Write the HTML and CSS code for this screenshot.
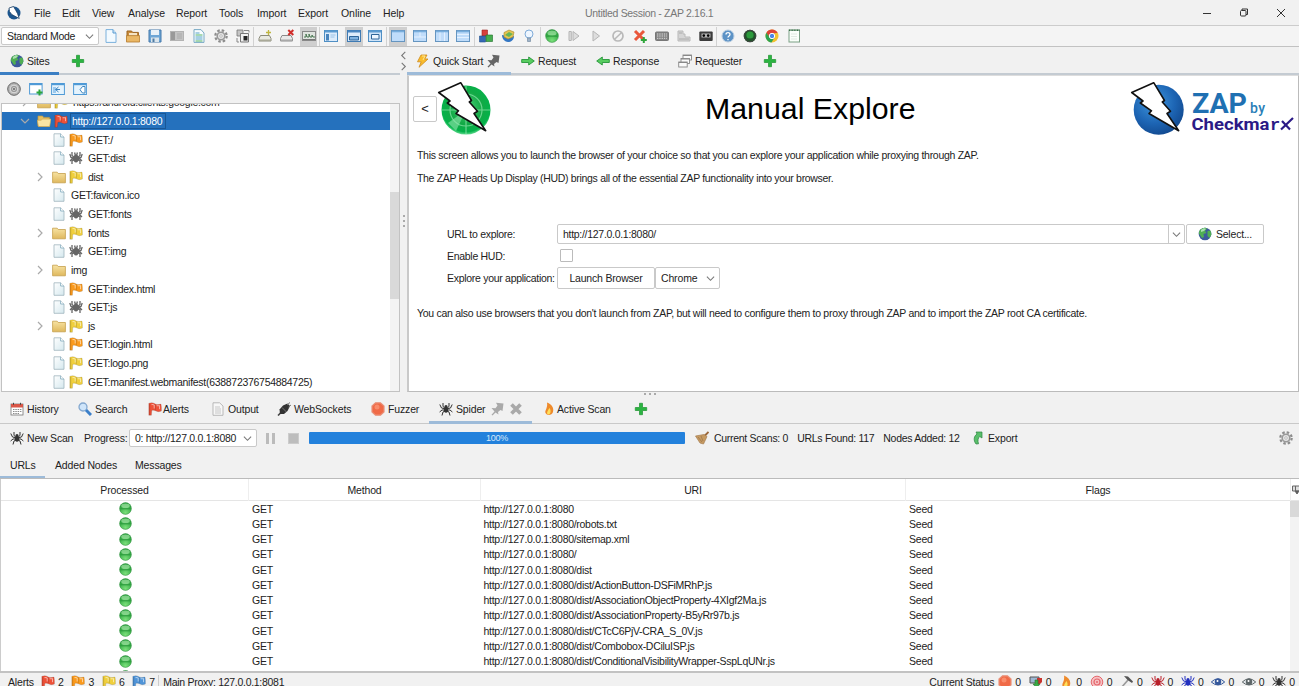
FILE: index.html
```html
<!DOCTYPE html>
<html lang="en">
<head>
<meta charset="utf-8">
<title>Untitled Session - ZAP 2.16.1</title>
<link rel="stylesheet" href="styles.css">
</head>
<body>
<svg class="defs" width="0" height="0">
<defs>
<radialGradient id="gGreen" cx=".5" cy=".45" r=".55"><stop offset="0" stop-color="#4fd27d"/><stop offset=".6" stop-color="#12a945"/><stop offset=".9" stop-color="#04b24a"/><stop offset="1" stop-color="#5fd98d"/></radialGradient>
<radialGradient id="gBlue" cx=".4" cy=".35" r=".7"><stop offset="0" stop-color="#3f97dd"/><stop offset=".6" stop-color="#1d65b4"/><stop offset="1" stop-color="#11488e"/></radialGradient>
<radialGradient id="gBall" cx=".5" cy=".85" r=".8"><stop offset="0" stop-color="#7be07b"/><stop offset="1" stop-color="#1f9a35"/></radialGradient>
<linearGradient id="gFold" x2="0" y2="1"><stop offset="0" stop-color="#f7e3a3"/><stop offset="1" stop-color="#dfb85d"/></linearGradient>
<linearGradient id="gDoc" x2="1" y2="1"><stop offset="0" stop-color="#fff"/><stop offset="1" stop-color="#d5e8ee"/></linearGradient>
<symbol id="bolt" viewBox="0 0 56 56"><path d="M1.7 11.5 23.7 1.7 34.5 19.5 32.3 21 40.5 30.3 37 32.5 48.7 49.7 19 32.5 21.5 29.8 10.3 22 13 20Z" fill="#fff" stroke="#111" stroke-width="1.6" stroke-linejoin="round"/></symbol>
<symbol id="app" viewBox="0 0 56 56"><circle cx="28" cy="28" r="26" fill="#1c568f"/><path d="M8 8 26 2 36 19 42 30 49 50 19 34 10 22Z" fill="#fff" stroke="#173b60" stroke-width="3"/></symbol>
<symbol id="doc" viewBox="0 0 14 14"><path d="M2 .8h6.6L12 4v9.3H2Z" fill="url(#gDoc)" stroke="#9fb4bd" stroke-width=".8"/><path d="M8.6.8V4H12" fill="#fff" stroke="#7fa8bb" stroke-width=".8"/></symbol>
<symbol id="newdoc" viewBox="0 0 14 14"><path d="M2 .6h7L12 4v9.4H2Z" fill="#f3faff" stroke="#7ab0dc"/><path d="M9 .6V4h3" fill="#cfe6f8" stroke="#5b9bd0"/></symbol>
<symbol id="folder" viewBox="0 0 14 14"><path d="M.6 2.2h4.600l1 1.300h7.200v9.300H.6Z" fill="url(#gFold)" stroke="#c5a04b" stroke-width=".8"/></symbol>
<symbol id="folderopen" viewBox="0 0 14 14"><path d="M1 12V2h4.600l1 1.400h5.800V12Z" fill="#e4bf62" stroke="#c39a3e" stroke-width=".7"/><path d="M.3 6.200h4l1-1.100H14l-1.400 7.400H1.400Z" fill="#f8e4a4" stroke="#d1aa52" stroke-width=".7"/></symbol>
<symbol id="open" viewBox="0 0 14 14"><path d="M1 12V2h4.600l1 1.400h5.800V12Z" fill="#c98a3a" stroke="#9c6421"/><path d="M3 4h8v4H3Z" fill="#f5e4c4"/><path d="M.4 6.600H13.600V13H.4Z" fill="#eab765" stroke="#b47a2c" stroke-width=".8"/></symbol>
<symbol id="flag" viewBox="0 0 14 14"><path d="M.8 1.300C3 .4 4.900.6 6.400 1.400l1.400.8c1.600.5 3.200.3 5.200-.1.500 2.600.5 4.900.4 7-2 .7-4 .8-5.400-.1C6.600 8.200 5.200 8 3.800 8.400L3.400 13.300H.8Z" fill="currentColor" stroke="#0003" stroke-width=".6"/><path d="M1.700 2v11" stroke="#0003" stroke-width=".8"/><path d="M7.300 2.300v5.700" stroke="#0003" stroke-width=".8"/><path d="M3.500 2.600c1.200-.3 2 0 2.700.4v3.500M8.700 3.700c1 .2 1.800.1 2.800-.1v3.600" stroke="#fff8" fill="none"/></symbol>
<symbol id="spider" viewBox="0 0 14 14"><g stroke="currentColor" stroke-width="1" fill="none"><path d="M7 7 4 4.500V1M7 7 2.500 6 .8 2.500M7 8H3L.6 10M7 8.500 4 10l-1 3.500M7 7l3-2.500V1M7 7l4.500-1 1.700-3.500M7 8h4l2.400 2M7 8.500 10 10l1 3.500"/></g><ellipse cx="7" cy="8" rx="2.200" ry="2.800" fill="currentColor"/><circle cx="7" cy="4.700" r="1.600" fill="currentColor"/></symbol>
<symbol id="crawler" viewBox="0 0 14 14"><g stroke="currentColor" stroke-width="1.300" fill="none"><path d="M3 1v3.500L6 7M11 1v3.500L8 7M.8 3 2 6.500l4 1M13.200 3 12 6.500l-4 1M1 10l2-2h8l2 2M3 13v-3l3-1.500M11 13v-3L8 8.500M5.600 1.500l.8 3M8.400 1.500l-.8 3"/></g><ellipse cx="7" cy="7.500" rx="2.500" ry="4" fill="currentColor"/></symbol>
<symbol id="ball" viewBox="0 0 14 14"><circle cx="7" cy="7" r="6.400" fill="url(#gBall)" stroke="#2b8a3a" stroke-width=".5"/><ellipse cx="7" cy="4" rx="4.600" ry="2.500" fill="#b4edb4" opacity=".6"/><path d="M1.500 7.200h11" stroke="#117f28" stroke-width="1.600" opacity=".4"/></symbol>
<symbol id="plus" viewBox="0 0 14 14"><path d="M5.500 1.300h3v4.200h4.200v3H8.500v4.200h-3V8.500H1.300v-3h4.200Z" fill="#2bb441" stroke="#2b9a3c" stroke-width=".8"/></symbol>
<symbol id="globe" viewBox="0 0 14 14"><circle cx="7" cy="7" r="6.300" fill="#3c5a9c"/><path d="M1.500 3.500C4 0 8 .3 9 1.500L7 4l1.500 2L5.500 7 6 10 4 11 2 8 .8 6.500ZM9.500 4l3-.5 1 4-2 3.500-2-2Z" fill="#4fae53"/><path d="M3 3C5 1 7 1 8 2L6 4 3 5Z" fill="#a9dfae"/></symbol>
<symbol id="save" viewBox="0 0 14 14"><path d="M1 1h12v12H1Z" fill="#6da6d6" stroke="#4479ab"/><path d="M3 1h8v5H3Z" fill="#e8f1f8"/><path d="M3 8.500h8V13H3Z" fill="#dbe5ec"/><path d="M4.500 9.500h2V13h-2Z" fill="#4f7ba2"/></symbol>
<symbol id="drive" viewBox="0 0 14 14"><rect x=".5" y="2.500" width="13" height="9" fill="#c3c3c3" stroke="#b3b3b3"/><path d="M1 3h4v8H1Z" fill="#999"/><path d="M7 5h5M7 7h5M7 9h5" stroke="#aaa"/></symbol>
<symbol id="report" viewBox="0 0 14 14"><path d="M2 .6h7L12 4v9.400H2Z" fill="#f7fcff" stroke="#78a9c4"/><path d="M3.500 4h4M3.500 8h7M3.500 10h7" stroke="#56a3c7"/><path d="M3.500 6h7M3.500 12h7" stroke="#59b364" stroke-width="1.200"/></symbol>
<symbol id="gear" viewBox="0 0 14 14"><circle cx="7" cy="7" r="5.700" fill="none" stroke="#8d8d8d" stroke-width="2.200" stroke-dasharray="2.500 1.976"/><circle cx="7" cy="7" r="3.800" fill="#e5e5e5" stroke="#999" stroke-width="1.600"/><circle cx="7" cy="7" r="1.300" fill="#fafafa" stroke="#999" stroke-width=".6"/></symbol>
<symbol id="target" viewBox="0 0 14 14"><circle cx="7" cy="7" r="6.300" fill="#b5b5b5" stroke="#666"/><circle cx="7" cy="7" r="3.800" fill="#999" stroke="#ececec" stroke-width=".8"/><circle cx="7" cy="7" r="1.600" fill="#777" stroke="#eee" stroke-width=".6"/></symbol>
<symbol id="scope" viewBox="0 0 14 14"><path d="M1 1h6v6H1Z" fill="#c5c5c5" stroke="#777" stroke-width=".8"/><path d="M4.500 4.500h8v8.500h-8Z" fill="#f0f0f0" stroke="#777"/><path d="M7.500 7h4v4.500h-4Z" fill="#222"/><path d="M8 1.500h5v2" fill="none" stroke="#888"/><path d="M1 9v4h2" fill="none" stroke="#888"/></symbol>
<symbol id="box" viewBox="0 0 14 14"><path d="M2.500 6.500h9l1.500 3v2.500H1V9.500Z" fill="#e9e9e2" stroke="#8b8b7a"/><path d="M1 10.500h12V12H1Z" fill="#a9a998"/><path d="M10.500 1v5M8 3.500h5" stroke="#c0b640" stroke-width="1.300"/></symbol>
<symbol id="boxx" viewBox="0 0 14 14"><path d="M2 6.500h9l1.500 3v2.500H.5V9.500Z" fill="#e9e9e9" stroke="#8b8b8b"/><path d="M.5 10.500h12V12H.5Z" fill="#a9a9a9"/><path d="m8.300 1 5 5M13.300 1l-5 5" stroke="#d02d2a" stroke-width="2"/></symbol>
<symbol id="pulse" viewBox="0 0 14 14"><rect x=".5" y="2.500" width="13" height="9" fill="#e0e4df" stroke="#888"/><path d="M1 10.500h12" stroke="#777"/><path d="M2 8h2V5l1 3h2V5l1 3h2V6l1 2h2" fill="none" stroke="#4a7752"/></symbol>
<symbol id="wl" viewBox="0 0 14 14"><rect x=".5" y="1.500" width="13" height="11" fill="#ddecfb" stroke="#4f8fc4"/><path d="M1 2.500h12" stroke="#5c9bd0" stroke-width="2"/><path d="M2 5h3v6.500H2Z" fill="#4985bd"/><path d="M6.500 6h5M6.500 8h4" stroke="#9cc4e8"/></symbol>
<symbol id="wb" viewBox="0 0 14 14"><rect x=".5" y="1.500" width="13" height="11" fill="#ddecfb" stroke="#3f7bb4"/><path d="M1 2.500h12" stroke="#4a87c0" stroke-width="2"/><path d="M2.500 7.500h9v3.500h-9Z" fill="#7fb2e0" stroke="#2e6599"/></symbol>
<symbol id="wm" viewBox="0 0 14 14"><rect x=".5" y="1.500" width="13" height="11" fill="#cfe4f8" stroke="#4f8fc4"/><path d="M1 2.500h12" stroke="#5c9bd0" stroke-width="2"/><path d="M3.500 5.500h7.500V10H3.500Z" fill="#edf6ff" stroke="#2e6599"/></symbol>
<symbol id="wf" viewBox="0 0 14 14"><rect x="0.500" y="1.500" width="13" height="11" fill="#bfdcfa" stroke="#6595c0"/><path d="M1 2.500h12" stroke="#78aedd" stroke-width="1.600"/></symbol>
<symbol id="wh" viewBox="0 0 14 14"><rect x=".5" y="1.500" width="13" height="11" fill="#bfdcfa" stroke="#6595c0"/><path d="M1 2.500h12" stroke="#78aedd" stroke-width="1.600"/><path d="M1 8h12" stroke="#e4f1ff"/><path d="M7 3.500V8" stroke="#e4f1ff"/></symbol>
<symbol id="wv" viewBox="0 0 14 14"><rect x=".5" y="1.500" width="13" height="11" fill="#bfdcfa" stroke="#6595c0"/><path d="M1 2.500h12" stroke="#78aedd" stroke-width="1.600"/><path d="M5 3.500V12M9.500 3.500V12" stroke="#e4f1ff"/></symbol>
<symbol id="wr" viewBox="0 0 14 14"><rect x=".5" y="1.500" width="13" height="11" fill="#bfdcfa" stroke="#6595c0"/><path d="M1 2.500h12" stroke="#78aedd" stroke-width="1.600"/><path d="M1 5.500h12M1 8.500h12" stroke="#e4f1ff"/></symbol>
<symbol id="winadd" viewBox="0 0 14 14"><rect x=".6" y="1.500" width="12.500" height="10.500" fill="#fff" stroke="#4f9ad6"/><path d="M1 2.400h12" stroke="#4f9ad6" stroke-width="1.600"/><path d="M10.500 7.500v6M7.500 10.500h6" stroke="#2aa43d" stroke-width="2"/></symbol>
<symbol id="winin" viewBox="0 0 14 14"><rect x=".6" y="1.500" width="12.800" height="11" fill="#e5f3fd" stroke="#4f9ad6"/><path d="M1 2.400h12" stroke="#4f9ad6" stroke-width="1.600"/><path d="M2 5h3v6H2Z" fill="#9cc9ee"/><path d="m7.500 5-3 2.500 3 2.500M5 7.500h4" fill="none" stroke="#3e86c0"/></symbol>
<symbol id="winout" viewBox="0 0 14 14"><rect x=".6" y="1.500" width="12.800" height="11" fill="#e5f3fd" stroke="#4f9ad6"/><path d="M1 2.400h12" stroke="#4f9ad6" stroke-width="1.600"/><path d="M9.500 4.500h2.500v6.500H9.500L7 7.700Z" fill="#fff" stroke="#3e86c0"/></symbol>
<symbol id="cubes" viewBox="0 0 14 14"><path d="M3 1h5.500v6H3Z" fill="#d8403c" stroke="#9f211f" stroke-width=".6"/><path d="M.5 7h6v6h-6Z" fill="#3568b5" stroke="#22508d" stroke-width=".6"/><path d="M7 6h6.500v6.500H7Z" fill="#46ae4f" stroke="#1f6f2a" stroke-width=".6"/></symbol>
<symbol id="update" viewBox="0 0 14 14"><path d="M1 6c0 4 3 7 6 7s6-2 6-6L9 8 6 7Z" fill="#3477c4"/><path d="M3 3.500 8 1l5 2-1 5-5 2-4-2Z" fill="#e5c452" stroke="#a58624" stroke-width=".6"/><path d="m4 6 4-3 4 2-4 3Z" fill="#68b557"/></symbol>
<symbol id="bulb" viewBox="0 0 14 14"><circle cx="7" cy="5" r="4" fill="#eef6ff" stroke="#7fabd8"/><path d="M5.500 9h3v3.500h-3Z" fill="#9fb4c9" stroke="#698098" stroke-width=".6"/></symbol>
<symbol id="step" viewBox="0 0 14 14"><path d="M2 2.500h2.300v9H2ZM6 2.500 12 7l-6 4.500Z" fill="#ddd" stroke="#b5b5b5"/></symbol>
<symbol id="play" viewBox="0 0 14 14"><path d="M4 2 10.500 7 4 12Z" fill="#ddd" stroke="#b5b5b5"/></symbol>
<symbol id="no" viewBox="0 0 14 14"><circle cx="7" cy="7" r="5" fill="none" stroke="#b9b9b9" stroke-width="1.700"/><path d="m3.600 10.300 6.800-6.600" stroke="#b9b9b9" stroke-width="1.500"/></symbol>
<symbol id="redx" viewBox="0 0 14 14"><path d="m2 2 9 9M11 2l-9 9" stroke="#e9573b" stroke-width="3"/><path d="M10.800 8v6M7.800 11h6" stroke="#2fa63c" stroke-width="2"/></symbol>
<symbol id="kbd" viewBox="0 0 14 14"><rect x=".5" y="3" width="13" height="8.500" rx="1" fill="#858585" stroke="#777"/><path d="M2 5h10M2 7h10M2 9.300h10" stroke="#ddd" stroke-dasharray="1.300 1"/></symbol>
<symbol id="shoe" viewBox="0 0 14 14"><path d="M1 2h5v3h2v3h5v4H1Z" fill="#d5d5d5" stroke="#b9b9b9"/><path d="M2 10h10M2 4h3" stroke="#aaa"/></symbol>
<symbol id="tape" viewBox="0 0 14 14"><rect x=".3" y="2.500" width="13.400" height="9.500" rx="1" fill="#3c3c3c"/><rect x="2.500" y="4.500" width="9" height="4" fill="#b5b5b5"/><circle cx="4.800" cy="6.600" r="1.300"/><circle cx="9.200" cy="6.600" r="1.300"/></symbol>
<symbol id="help" viewBox="0 0 14 14"><circle cx="7" cy="7" r="6" fill="#5d93c6" stroke="#b9cde0"/><path d="M5 5.500c0-2.500 4-2.500 4 0C9 7 7 7 7 8.500M7 10v1.300" fill="none" stroke="#fff" stroke-width="1.300"/></symbol>
<symbol id="radar" viewBox="0 0 14 14"><circle cx="7" cy="7" r="6.300" fill="#20542a"/><circle cx="7" cy="6" r="3.600" fill="#2c9a3c"/><circle cx="7" cy="7" r="5.700" fill="none" stroke="#444"/></symbol>
<symbol id="chrome" viewBox="0 0 14 14"><circle cx="7" cy="7" r="6.500" fill="#f2c230"/><path d="M1.400 3.700A6.500 6.500 0 0 1 12.700 4L7 4.300 4 8Z" fill="#dc4437"/><path d="M1.400 3.700A6.500 6.500 0 0 0 6.500 13.500L9.500 8.500 4.500 8Z" fill="#2fa450"/><circle cx="7" cy="7" r="2.700" fill="#4a86e8" stroke="#fff"/></symbol>
<symbol id="note" viewBox="0 0 14 14"><rect x="2" y="1" width="10.500" height="12" fill="#fafffa" stroke="#7ba085"/><path d="M2 1.300h10.500" stroke="#3a7048" stroke-width="1.500" stroke-dasharray="1 .6"/><path d="M4 5h6M4 7.500h6M4 10h6" stroke="#e0eae2"/></symbol>
<symbol id="zap" viewBox="0 0 14 14"><path d="M5 1h6L8.800 5H12L3 13.300 5.200 7.800H1.500Z" fill="#f9bc2c" stroke="#cf8a1a" stroke-width=".8"/><path d="M6 2h3L7 6" fill="none" stroke="#ffe793"/></symbol>
<symbol id="pin" viewBox="0 0 14 14"><path d="m6 .8 7.500.7L12.500 9 10.500 8 8 10l.5 2.500-3-2-3 3-1-.8 3-3.200L1.500 6l4 .3L7.500 3.500Z" fill="currentColor"/></symbol>
<symbol id="right" viewBox="0 0 14 14"><path d="M.7 5.500h7V3l5.600 4-5.600 4V8.500h-7Z" fill="#58cc60" stroke="#26963a" stroke-width=".9"/></symbol>
<symbol id="left" viewBox="0 0 14 14"><path d="M13.300 5.500h-7V3L.7 7l5.600 4V8.500h7Z" fill="#58cc60" stroke="#26963a" stroke-width=".9"/></symbol>
<symbol id="stack" viewBox="0 0 14 14"><g fill="#fafafa" stroke="#888" stroke-width=".9"><rect x="5" y="1" width="8.500" height="5"/><rect x="3" y="4.500" width="8.500" height="5"/><rect x=".7" y="8" width="8.500" height="5"/></g><path d="M5 1.500h8.500M3 5h8.500M.7 8.500h8.500" stroke="#888"/></symbol>
<symbol id="cal" viewBox="0 0 14 14"><rect x="1" y="2" width="12" height="11" fill="#fff" stroke="#777" stroke-width=".8"/><path d="M1 2h12v3.500H1Z" fill="#d95748"/><path d="M3 7.500h9M3 9.500h9M3 11.500h6" stroke="#8c8c8c" stroke-dasharray="1.500 .8"/><path d="M3.500.8v2M10.500.8v2" stroke="#444"/></symbol>
<symbol id="mag" viewBox="0 0 14 14"><circle cx="5" cy="5" r="4" fill="#cfe5fa" stroke="#84a8cf" stroke-width="1.300"/><path d="m8 8 5 5" stroke="#3b7fc9" stroke-width="3"/></symbol>
<symbol id="out" viewBox="0 0 14 14"><path d="M2 .8h6.600L12 4v9.300H2Z" fill="#f7f7f7" stroke="#aaa" stroke-width=".8"/><path d="M4 5h5M4 7h6M4 9h6M4 11h6" stroke="#bbb" stroke-width=".8"/></symbol>
<symbol id="plug" viewBox="0 0 14 14"><path d="m1 13.500 3-3" stroke="#444" stroke-width="1.600"/><path d="M2.500 7.500 6 3.500l4.500-2L13 4l-2.500 5-3.500 3H3Z" fill="#333"/><path d="m10 3 3-2.500M11.500 5 14 3M5 5.500l4.500 4.500" stroke="#777"/></symbol>
<symbol id="fuzz" viewBox="0 0 14 14"><path d="M4.500.8h5L13 4v6l-3.500 3.200h-5L1 10V4Z" fill="#f06a47" stroke="#e99179" stroke-width="1.200"/><circle cx="6" cy="5" r="2.500" fill="#f98c6b"/></symbol>
<symbol id="x" viewBox="0 0 14 14"><path d="m2.500 2.500 9 9M11.500 2.500l-9 9" stroke="#a9a9a9" stroke-width="3.700"/></symbol>
<symbol id="flame" viewBox="0 0 14 14"><path d="M5 .5C10 2.500 12 6 11 10c-1 3.500-6 4-7.500 1C2.500 8.500 6 6 5 .5Z" fill="#ee8a2b"/><path d="M7.500 6c2 3 1 6-1 6.500C4 12 5 9.500 7.500 6Z" fill="#ffe05b"/></symbol>
<symbol id="broom" viewBox="0 0 14 14"><path d="m9.500 5 4-4" stroke="#9b673a" stroke-width="1.800"/><path d="M.5 5 9 3.500l3 2L8.500 13 5 12Z" fill="#c69a62" stroke="#a67e50" stroke-width=".7"/><path d="m3 6 4 5M6 5l2 5" stroke="#9c774c" stroke-width=".8"/></symbol>
<symbol id="exp" viewBox="0 0 14 14"><path d="M5 1h6v6L8.700 5.500C7 7 6.500 9.500 7.500 12.800L5 13C2 9 3 5 6 3Z" fill="#5abf6b" stroke="#2b8440" stroke-width=".7"/></symbol>
<symbol id="down" viewBox="0 0 14 14"><path d="M1 2h9v6H1Z" fill="#9fb7d3" stroke="#555"/><path d="M8 3h5v4l-2 2H8Z" fill="#c9352e"/><path d="M6 5h3v4h2l-3.500 4L4 9h2Z" fill="#3ba947" stroke="#237531" stroke-width=".6"/></symbol>
<symbol id="swirl" viewBox="0 0 14 14"><circle cx="7" cy="7" r="5.800" fill="#f7c0c2" stroke="#e4686e"/><circle cx="7" cy="7" r="3" fill="none" stroke="#e4686e" stroke-width="1.200"/><circle cx="7" cy="7" r="1" fill="#e4686e"/></symbol>
<symbol id="hammer" viewBox="0 0 14 14"><path d="M1 13 8 5" stroke="#999" stroke-width="1.600"/><path d="m4 1 4 .5 5 5-1 1.500L7.500 5Z" fill="#555"/></symbol>
<symbol id="eye" viewBox="0 0 14 14"><path d="M.3 7Q7 .5 13.700 7 7 13 .3 7Z" fill="#e5e9ed" stroke="currentColor"/><circle cx="7" cy="6.800" r="3.200" fill="currentColor"/><circle cx="6.500" cy="6" r="1" fill="#fff"/></symbol>
<symbol id="cv" viewBox="0 0 10 10"><path d="m1 3 4 4 4-4" fill="none" stroke="currentColor" stroke-width="1.200"/></symbol>
<symbol id="cr" viewBox="0 0 10 10"><path d="m3 1 4 4-4 4" fill="none" stroke="currentColor" stroke-width="1.200"/></symbol>
<symbol id="cl" viewBox="0 0 10 10"><path d="M7 1 3 5l4 4" fill="none" stroke="currentColor" stroke-width="1.200"/></symbol>
</defs>
</svg>

<div class="window">
<header class="titlebar">
  <svg class="i"><use href="#app"/></svg>
  <nav class="menu"><span>File</span><span>Edit</span><span>View</span><span>Analyse</span><span>Report</span><span>Tools</span><span>Import</span><span>Export</span><span>Online</span><span>Help</span></nav>
  <div class="title">Untitled Session - ZAP 2.16.1</div>
  <svg class="winbtns" viewBox="0 0 92 14" fill="none" stroke="#333"><path d="M1 7.500h8"/><rect x="38.500" y="4.500" width="5.500" height="5.500" rx="1"/><path d="M40 4V3h5.500v5.500H44M75 3l8 8M83 3l-8 8"/></svg>
</header>

<div class="toolbar">
  <div class="combo mode"><span>Standard Mode</span><svg class="cv"><use href="#cv"/></svg></div>
  <div class="icons">
    <b><svg class="i"><use href="#newdoc"/></svg></b><b><svg class="i"><use href="#open"/></svg></b><b><svg class="i"><use href="#save"/></svg></b><b><svg class="i"><use href="#drive"/></svg></b><b><svg class="i"><use href="#report"/></svg></b><b><svg class="i"><use href="#gear"/></svg></b><b class="sep"><svg class="i"><use href="#scope"/></svg></b>
    <b><svg class="i"><use href="#box"/></svg></b><b><svg class="i"><use href="#boxx"/></svg></b><b class="on sep"><svg class="i"><use href="#pulse"/></svg></b>
    <b><svg class="i"><use href="#wl"/></svg></b><b class="on"><svg class="i"><use href="#wb"/></svg></b><b class="sep"><svg class="i"><use href="#wm"/></svg></b>
    <b class="on"><svg class="i"><use href="#wf"/></svg></b><b><svg class="i"><use href="#wh"/></svg></b><b><svg class="i"><use href="#wv"/></svg></b><b class="sep"><svg class="i"><use href="#wr"/></svg></b>
    <b><svg class="i"><use href="#cubes"/></svg></b><b><svg class="i"><use href="#update"/></svg></b><b class="sep"><svg class="i"><use href="#bulb"/></svg></b>
    <b><svg class="i"><use href="#ball"/></svg></b><b><svg class="i"><use href="#step"/></svg></b><b><svg class="i"><use href="#play"/></svg></b><b><svg class="i"><use href="#no"/></svg></b><b><svg class="i"><use href="#redx"/></svg></b><b><svg class="i"><use href="#kbd"/></svg></b><b><svg class="i"><use href="#shoe"/></svg></b><b class="sep"><svg class="i"><use href="#tape"/></svg></b>
    <b><svg class="i"><use href="#help"/></svg></b><b><svg class="i"><use href="#radar"/></svg></b><b><svg class="i"><use href="#chrome"/></svg></b><b><svg class="i"><use href="#note"/></svg></b>
  </div>
</div>

<div class="upper">
  <section class="sites">
    <div class="tabs"><div class="tab active sites-tab"><svg class="i"><use href="#globe"/></svg><span>Sites</span></div><div class="tab add"><svg class="i"><use href="#plus"/></svg></div></div>
    <div class="sites-tools"><svg class="i"><use href="#target"/></svg><svg class="i"><use href="#winadd"/></svg><svg class="i"><use href="#winin"/></svg><svg class="i"><use href="#winout"/></svg></div>
    <div class="tree">
      <ul class="nodes">
        <li class="top"><svg class="ch"><use href="#cr"/></svg><svg class="i"><use href="#folder"/></svg><svg class="i yellow"><use href="#flag"/></svg><span>https://android.clients.google.com</span></li>
        <li class="top sel"><svg class="ch"><use href="#cv"/></svg><svg class="i"><use href="#folderopen"/></svg><svg class="i red"><use href="#flag"/></svg><span>http://127.0.0.1:8080</span></li>
        <li><svg class="ch"></svg><svg class="i"><use href="#doc"/></svg><svg class="i orange"><use href="#flag"/></svg><span>GET:/</span></li>
        <li><svg class="ch"></svg><svg class="i"><use href="#doc"/></svg><svg class="i grey"><use href="#crawler"/></svg><span>GET:dist</span></li>
        <li><svg class="ch"><use href="#cr"/></svg><svg class="i"><use href="#folder"/></svg><svg class="i yellow"><use href="#flag"/></svg><span>dist</span></li>
        <li><svg class="ch"></svg><svg class="i"><use href="#doc"/></svg><span>GET:favicon.ico</span></li>
        <li><svg class="ch"></svg><svg class="i"><use href="#doc"/></svg><svg class="i grey"><use href="#crawler"/></svg><span>GET:fonts</span></li>
        <li><svg class="ch"><use href="#cr"/></svg><svg class="i"><use href="#folder"/></svg><svg class="i yellow"><use href="#flag"/></svg><span>fonts</span></li>
        <li><svg class="ch"></svg><svg class="i"><use href="#doc"/></svg><svg class="i grey"><use href="#crawler"/></svg><span>GET:img</span></li>
        <li><svg class="ch"><use href="#cr"/></svg><svg class="i"><use href="#folder"/></svg><span>img</span></li>
        <li><svg class="ch"></svg><svg class="i"><use href="#doc"/></svg><svg class="i orange"><use href="#flag"/></svg><span>GET:index.html</span></li>
        <li><svg class="ch"></svg><svg class="i"><use href="#doc"/></svg><svg class="i grey"><use href="#crawler"/></svg><span>GET:js</span></li>
        <li><svg class="ch"><use href="#cr"/></svg><svg class="i"><use href="#folder"/></svg><svg class="i yellow"><use href="#flag"/></svg><span>js</span></li>
        <li><svg class="ch"></svg><svg class="i"><use href="#doc"/></svg><svg class="i orange"><use href="#flag"/></svg><span>GET:login.html</span></li>
        <li><svg class="ch"></svg><svg class="i"><use href="#doc"/></svg><svg class="i yellow"><use href="#flag"/></svg><span>GET:logo.png</span></li>
        <li><svg class="ch"></svg><svg class="i"><use href="#doc"/></svg><svg class="i yellow"><use href="#flag"/></svg><span>GET:manifest.webmanifest(638872376754884725)</span></li>
      </ul>
      <div class="track"><div class="thumb"></div></div>
    </div>
  </section>
  <div class="splitter"><svg><use href="#cl"/></svg><svg><use href="#cr"/></svg><div class="dots"><i></i><i></i><i></i></div></div>
  <section class="work">
    <div class="tabs work-tabs">
      <div class="tab active"><svg class="i"><use href="#zap"/></svg><span>Quick Start</span><svg class="i dark"><use href="#pin"/></svg></div>
      <div class="tab"><svg class="i"><use href="#right"/></svg><span>Request</span></div>
      <div class="tab"><svg class="i"><use href="#left"/></svg><span>Response</span></div>
      <div class="tab"><svg class="i"><use href="#stack"/></svg><span>Requester</span></div>
      <div class="tab"><svg class="i"><use href="#plus"/></svg></div>
    </div>
    <div class="panel">
      <div class="hero">
        <div class="back">&lt;</div>
        <svg class="emblem" viewBox="0 0 56 56"><circle cx="29" cy="29" r="24.500" fill="url(#gGreen)"/><g fill="none" stroke="#8fe6ae" stroke-width="1.200" opacity=".7"><circle cx="29" cy="29" r="16"/><path d="M29 5v48M5 29h48"/></g><path d="m29 29-18 13 8 8Z" fill="#8fe6ae" opacity=".6"/><use href="#bolt"/></svg>
        <h1>Manual Explore</h1>
        <svg class="brand" viewBox="0 0 166 58"><circle cx="28.700" cy="28.700" r="25" fill="url(#gBlue)"/><use href="#bolt" width="56" height="56"/><text class="b-zap" x="62" y="31.500" textLength="55" lengthAdjust="spacingAndGlyphs">ZAP</text><text class="b-by" x="120" y="31.500" textLength="15">by</text><text class="b-cx" x="61.500" y="48.500" textLength="78" lengthAdjust="spacingAndGlyphs">Checkma</text><text class="b-mono" x="140" y="48.500">r</text><path d="m152 40 8 8.500M163 37l-12 11.500" stroke="#2b1a86" stroke-width="2.200" fill="none"/></svg>
      </div>
      <p class="p1">This screen allows you to launch the browser of your choice so that you can explore your application while proxying through ZAP.</p>
      <p class="p2">The ZAP Heads Up Display (HUD) brings all of the essential ZAP functionality into your browser.</p>
      <div class="form">
        <label>URL to explore:</label>
        <div class="line"><div class="url"><span>http://127.0.0.1:8080/</span><em><svg class="cv"><use href="#cv"/></svg></em></div><div class="btn select"><svg class="i"><use href="#globe"/></svg><span>Select...</span></div></div>
        <label>Enable HUD:</label>
        <div class="line"><div class="check"></div></div>
        <label>Explore your application:</label>
        <div class="line"><div class="btn launch">Launch Browser</div><div class="combo browser"><span>Chrome</span><svg class="cv"><use href="#cv"/></svg></div></div>
      </div>
      <p class="p3">You can also use browsers that you don't launch from ZAP, but will need to configure them to proxy through ZAP and to import the ZAP root CA certificate.</p>
    </div>
  </section>
</div>
<div class="hsplit"><i></i><i></i><i></i></div>

<section class="lower">
  <div class="tabs lower-tabs">
    <div class="tab"><svg class="i"><use href="#cal"/></svg><span>History</span></div>
    <div class="tab"><svg class="i"><use href="#mag"/></svg><span>Search</span></div>
    <div class="tab tight"><svg class="i red"><use href="#flag"/></svg><span>Alerts</span></div>
    <div class="tab"><svg class="i"><use href="#out"/></svg><span>Output</span></div>
    <div class="tab"><svg class="i"><use href="#plug"/></svg><span>WebSockets</span></div>
    <div class="tab"><svg class="i"><use href="#fuzz"/></svg><span>Fuzzer</span></div>
    <div class="tab active spider"><svg class="i black"><use href="#spider"/></svg><span>Spider</span><svg class="i pale"><use href="#pin"/></svg><svg class="i"><use href="#x"/></svg></div>
    <div class="tab tight"><svg class="i"><use href="#flame"/></svg><span>Active Scan</span></div>
    <div class="tab"><svg class="i"><use href="#plus"/></svg></div>
  </div>
  <div class="scan">
    <div class="newscan"><svg class="i black"><use href="#spider"/></svg><span>New Scan</span></div>
    <span class="plabel">Progress:</span>
    <div class="combo prog"><span>0: http://127.0.0.1:8080</span><svg class="cv"><use href="#cv"/></svg></div>
    <div class="pause"><i></i><i></i></div><div class="stop"></div>
    <div class="bar">100%</div>
    <svg class="i broom"><use href="#broom"/></svg>
    <div class="stats"><span>Current Scans: 0</span><span>URLs Found: 117</span><span>Nodes Added: 12</span></div>
    <div class="export"><svg class="i"><use href="#exp"/></svg><span>Export</span></div>
    <svg class="i opts"><use href="#gear"/></svg>
  </div>
  <div class="subtabs"><span class="cur">URLs</span><span>Added Nodes</span><span>Messages</span></div>
  <div class="table">
    <div class="thead"><div>Processed</div><div>Method</div><div>URI</div><div>Flags</div><div class="corner"><svg viewBox="0 0 9 10" fill="#ddd" stroke="#666"><path d="M1.500 1h9v5h-9ZM4.500 1v5"/><path d="M4 6h4L6 9Z" fill="#555"/></svg></div></div>
    <div class="tbody">
      <div class="rows">
        <div class="row"><svg class="ball"><use href="#ball"/></svg><span>GET</span><span>http://127.0.0.1:8080</span><span>Seed</span></div>
        <div class="row"><svg class="ball"><use href="#ball"/></svg><span>GET</span><span>http://127.0.0.1:8080/robots.txt</span><span>Seed</span></div>
        <div class="row"><svg class="ball"><use href="#ball"/></svg><span>GET</span><span>http://127.0.0.1:8080/sitemap.xml</span><span>Seed</span></div>
        <div class="row"><svg class="ball"><use href="#ball"/></svg><span>GET</span><span>http://127.0.0.1:8080/</span><span>Seed</span></div>
        <div class="row"><svg class="ball"><use href="#ball"/></svg><span>GET</span><span>http://127.0.0.1:8080/dist</span><span>Seed</span></div>
        <div class="row"><svg class="ball"><use href="#ball"/></svg><span>GET</span><span>http://127.0.0.1:8080/dist/ActionButton-DSFiMRhP.js</span><span>Seed</span></div>
        <div class="row"><svg class="ball"><use href="#ball"/></svg><span>GET</span><span>http://127.0.0.1:8080/dist/AssociationObjectProperty-4XIgf2Ma.js</span><span>Seed</span></div>
        <div class="row"><svg class="ball"><use href="#ball"/></svg><span>GET</span><span>http://127.0.0.1:8080/dist/AssociationProperty-B5yRr97b.js</span><span>Seed</span></div>
        <div class="row"><svg class="ball"><use href="#ball"/></svg><span>GET</span><span>http://127.0.0.1:8080/dist/CTcC6PjV-CRA_S_0V.js</span><span>Seed</span></div>
        <div class="row"><svg class="ball"><use href="#ball"/></svg><span>GET</span><span>http://127.0.0.1:8080/dist/Combobox-DCiluISP.js</span><span>Seed</span></div>
        <div class="row"><svg class="ball"><use href="#ball"/></svg><span>GET</span><span>http://127.0.0.1:8080/dist/ConditionalVisibilityWrapper-SspLqUNr.js</span><span>Seed</span></div>
        <div class="row"><svg class="ball"><use href="#ball"/></svg></div>
      </div>
      <div class="track2"><div class="thumb2"></div></div>
    </div>
  </div>
</section>

<footer class="status">
  <span class="lbl">Alerts</span>
  <div class="cnt"><svg class="i red"><use href="#flag"/></svg>2</div><div class="cnt"><svg class="i orange"><use href="#flag"/></svg>3</div><div class="cnt"><svg class="i yellow"><use href="#flag"/></svg>6</div><div class="cnt last"><svg class="i blue"><use href="#flag"/></svg>7</div>
  <span class="proxy">Main Proxy: 127.0.0.1:8081</span>
  <span class="cs">Current Status</span>
  <div class="cnt"><svg class="i"><use href="#fuzz"/></svg>0</div><div class="cnt"><svg class="i"><use href="#down"/></svg>0</div><div class="cnt"><svg class="i"><use href="#flame"/></svg>0</div><div class="cnt"><svg class="i"><use href="#swirl"/></svg>0</div><div class="cnt"><svg class="i"><use href="#hammer"/></svg>0</div><div class="cnt"><svg class="i crimson"><use href="#spider"/></svg>0</div><div class="cnt"><svg class="i royal"><use href="#spider"/></svg>0</div><div class="cnt"><svg class="i navy"><use href="#eye"/></svg>0</div><div class="cnt"><svg class="i slate"><use href="#eye"/></svg>0</div><div class="cnt"><svg class="i black"><use href="#spider"/></svg>0</div>
</footer>
</div>
</body>
</html>
```
FILE: styles.css
```css
* { box-sizing: border-box; margin: 0; padding: 0; }
body { width: 1299px; height: 686px; overflow: hidden; background: #f1f1f1; color: #222; font: 10.5px/14px "Liberation Sans", Arial, sans-serif; letter-spacing: -0.29px; white-space: nowrap; }
.defs { display: block; }
.window { height: 686px; display: flex; flex-direction: column; overflow: hidden; }
.i { width: 14px; height: 14px; flex: none; display: block; }
.cv { width: 9px; height: 9px; color: #777; flex: none; }
.red { color: #ee5138; } .orange { color: #fb9a1c; } .yellow { color: #f0cf3c; } .blue { color: #4f94d8; }
.grey { color: #666; } .black { color: #333; } .crimson { color: #b9202b; } .royal { color: #2330bf; } .navy { color: #35589b; } .slate { color: #5d6668; }
.dark { color: #666; } .pale { color: #a9a9a9; }

.titlebar { height: 25px; flex: none; display: grid; grid-template-columns: 27px 413px 419px 1fr; align-items: center; padding-left: 7px; }
.menu { display: grid; grid-template-columns: 28px 30px 36px 48px 43px 38px 41px 43px 42px 40px; letter-spacing: -0.05px; }
.title { width: 129px; margin-left: 138px; color: #777; letter-spacing: -0.32px; }
.winbtns { width: 92px; height: 14px; margin-left: 336px; }

.toolbar { height: 22px; flex: none; display: flex; align-items: center; padding-left: 1px; border-top: 1px solid #ccc; border-bottom: 1px solid #c2c2c2; background: #f4f4f4; }
.combo { display: flex; align-items: center; justify-content: space-between; background: #fff; border: 1px solid #c9c9c9; border-radius: 2px; }
.mode { width: 98px; height: 18px; padding: 0 4px 0 5px; }
.icons { display: flex; margin-left: 1px; }
.icons b { width: 22.050px; height: 19px; display: flex; align-items: center; justify-content: center; }
.icons .sep { border-right: 1px solid #d2d2d2; }
.icons .on { background: #cfcfcf; background-clip: content-box; padding: 0 2px; }

.upper { height: 345px; flex: none; display: flex; }
.sites { width: 400px; display: flex; flex-direction: column; }
.tabs { height: 28px; flex: none; display: flex; border-bottom: 2px solid #c4cbd2; letter-spacing: -0.15px; }
.tab { height: 28px; display: flex; align-items: center; gap: 3px; }
.tab.active { border-bottom: 3px solid #9dbbd9; }
.sites-tab { width: 59px; padding: 3px 0 0 10px; }
.tab.sites-tab { border-color: #3b7fc4; }
.tab.add { padding-left: 12px; }
.sites-tools { height: 28px; display: flex; align-items: center; gap: 8px; padding-left: 7px; }
.tree { height: 289px; margin-left: 1px; display: flex; background: #fff; border: 1px solid #c2c2c2; overflow: hidden; }
.nodes { width: 389px; list-style: none; margin-top: -11px; }
.nodes li { height: 18.640px; display: flex; align-items: center; padding-left: 33px; }
.nodes .top { padding-left: 18px; }
.nodes .ch { width: 10px; height: 10px; margin-right: 7px; color: #aaa; flex: none; }
.nodes .i + .i { margin-left: 3px; }
.nodes .i + span { margin-left: 5px; }
.nodes .sel { background: #2571bd; color: #fff; }
.nodes .sel .i + span { border: 1px solid #195796; margin-left: 2px; padding: 0 3px 0 1px; }
.track { width: 9px; background: #f3f3f3; padding-top: 88px; }
.thumb { height: 107px; background: #d9d9d9; }
.splitter { width: 7px; display: flex; flex-direction: column; align-items: center; color: #777; }
.splitter svg { width: 9px; height: 9px; margin-top: 4px; flex: none; }
.splitter svg + svg { margin-top: 2px; }
.dots { margin-top: 144px; display: grid; gap: 3px; }
.dots i { width: 2px; height: 2px; background: #aaa; }
.work { width: 892px; }
.work-tabs { display: grid; grid-template-columns: 104px 75px 82px 84px 1fr; }
.work-tabs .tab { padding-left: 9px; }
.work-tabs .tab:first-child { padding-top: 3px; }
.work-tabs .tab:nth-child(n+2) { padding-left: 10px; }
.work-tabs .tab:last-child { padding-left: 11px; }
.panel { height: 317px; background: #fff; border: 1px solid #bbb; border-left: 2px solid #c9c9c9; border-top-color: #ddd; padding: 5px 0 0 4px; }
.hero { height: 60px; display: grid; grid-template-columns: 24px 58px 637px 1fr; }
.back { height: 26px; width: 24px; margin-top: 15px; border: 1px solid #c9c9c9; border-radius: 2px; text-align: center; line-height: 24px; font-size: 13px; }
.emblem { width: 56px; height: 56px; }
.brand { width: 166px; height: 58px; margin-left: -2px; }
h1 { font: 30.300px/56px "Liberation Sans", Arial, sans-serif; letter-spacing: 0; color: #000; padding-left: 210px; }
.b-zap, .b-by, .b-cx, .b-mono { letter-spacing: 0; }
.b-zap { font: 700 27px Roboto, sans-serif; fill: #1f70b2; }
.b-by { font: 500 14px Roboto, sans-serif; fill: #2a7fb8; }
.b-cx { font: 700 16.500px Roboto, sans-serif; fill: #2b1a86; }
.b-mono { font: 700 17px "Liberation Mono", monospace; fill: #2b1a86; }
.panel p { padding-left: 4px; }
.p1 { margin-top: 7px; }
.p2 { margin-top: 8.500px; letter-spacing: -0.32px; }
.form { margin: 39.500px 0 0 34px; display: grid; grid-template-columns: 110px 1fr; grid-template-rows: 20px 23px 22px; align-items: center; }
.line { display: flex; align-items: center; }
.url { width: 628px; height: 20px; border: 1px solid #c9c9c9; border-radius: 2px; display: flex; justify-content: space-between; align-items: center; padding-left: 5px; }
.url em { width: 16px; height: 18px; border-left: 1px solid #c9c9c9; display: flex; align-items: center; justify-content: center; }
.btn { border: 1px solid #c9c9c9; border-radius: 2px; display: flex; align-items: center; justify-content: center; gap: 4px; }
.select { width: 78px; height: 20px; margin-left: 1px; letter-spacing: -0.2px; }
.check { width: 13px; height: 13px; margin-left: 3px; border: 1px solid #bbb; border-radius: 1px; }
.launch { width: 98px; height: 22px; letter-spacing: -0.2px; }
.browser { width: 65px; height: 22px; padding: 0 4px 0 5px; letter-spacing: -0.15px; }
.p3 { margin-top: 17px; }

.hsplit { height: 4px; flex: none; display: flex; justify-content: center; align-items: center; gap: 3px; }
.hsplit i { width: 2px; height: 2px; background: #aaa; }

.lower { height: 276px; flex: none; display: flex; flex-direction: column; }
.lower-tabs { display: grid; grid-template-columns: 68px 70px 63px 66px 94px 68px 103px 92px 1fr; border-bottom: 1px solid #c9c9c9; }
.lower-tabs .tab { padding: 0 0 2px 10px; }
.lower-tabs .tight { gap: 1px; }
.lower-tabs .spider { padding-top: 1px; padding-bottom: 0; }
.lower-tabs .spider .pale { margin-left: 2px; }
.lower-tabs .spider .i:last-child { margin-left: 2px; }
.scan { height: 28px; flex: none; display: grid; grid-template-columns: 74px 45px 128px 31px 21px 377px 19px 259px 315px 1fr; align-items: center; padding-left: 10px; }
.newscan { display: flex; gap: 3px; letter-spacing: -0.2px; }
.prog { height: 18px; padding: 0 4px 0 5px; }
.pause { display: flex; gap: 3px; padding-left: 9px; }
.pause i { width: 3px; height: 11px; background: #bbb; }
.stop { width: 11px; height: 11px; background: #bdbdbd; border: 1px solid #ccc; }
.bar { width: 376px; height: 12px; background: #2381dc; color: #d5e8fa; font-size: 9px; line-height: 12px; text-align: center; border-radius: 1px; }
.broom { margin-left: 9px; }
.stats { display: flex; gap: 9px; padding-left: 9px; }
.plabel { letter-spacing: -0.15px; }
.export { display: flex; gap: 3px; padding-left: 7px; letter-spacing: -0.15px; }
.subtabs { height: 27px; flex: none; display: flex; border-bottom: 1px solid #bbb; line-height: 26px; letter-spacing: -0.15px; }
.subtabs .cur { width: 45px; padding-left: 10px; border-bottom: 2px solid #9dbbd9; }
.subtabs span + span { width: 80px; padding-left: 10px; }
.table { height: 193px; background: #fff; border-left: 1px solid #ccc; overflow: hidden; }
.thead { height: 22px; display: grid; grid-template-columns: 248px 232px 425px 385px 1fr; border-bottom: 1px solid #e5e5e5; line-height: 22px; text-align: center; letter-spacing: -0.15px; }
.thead div { border-right: 1px solid #eee; }
.corner { display: flex; align-items: center; }
.corner svg { width: 9px; height: 10px; flex: none; }
.tbody { display: flex; }
.rows { width: 1290px; }
.row { height: 15.250px; display: grid; grid-template-columns: 251px 231.500px 425.500px 1fr; align-items: center; }
.row span:nth-of-type(1), .row span:nth-of-type(3) { letter-spacing: -0.2px; }
.ball { width: 13px; height: 13px; margin-left: 117.500px; }
.track2 { width: 9px; height: 172px; background: #f3f3f3; }
.thumb2 { height: 16px; background: #d9d9d9; }
.status { height: 19px; flex: none; margin-top: -1px; border-top: 2px solid #c2c2c2; background: #f1f1f1; display: flex; align-items: center; }
.status .lbl { width: 41px; padding-left: 8px; flex: none; letter-spacing: -0.15px; }
.cnt { width: 30.450px; display: flex; align-items: center; gap: 3px; flex: none; }
.status .last { width: 27px; border-right: 1px solid #ccc; }
.proxy { width: 770px; padding-left: 4px; flex: none; }
.cs { width: 69px; flex: none; letter-spacing: -0.2px; }
```
